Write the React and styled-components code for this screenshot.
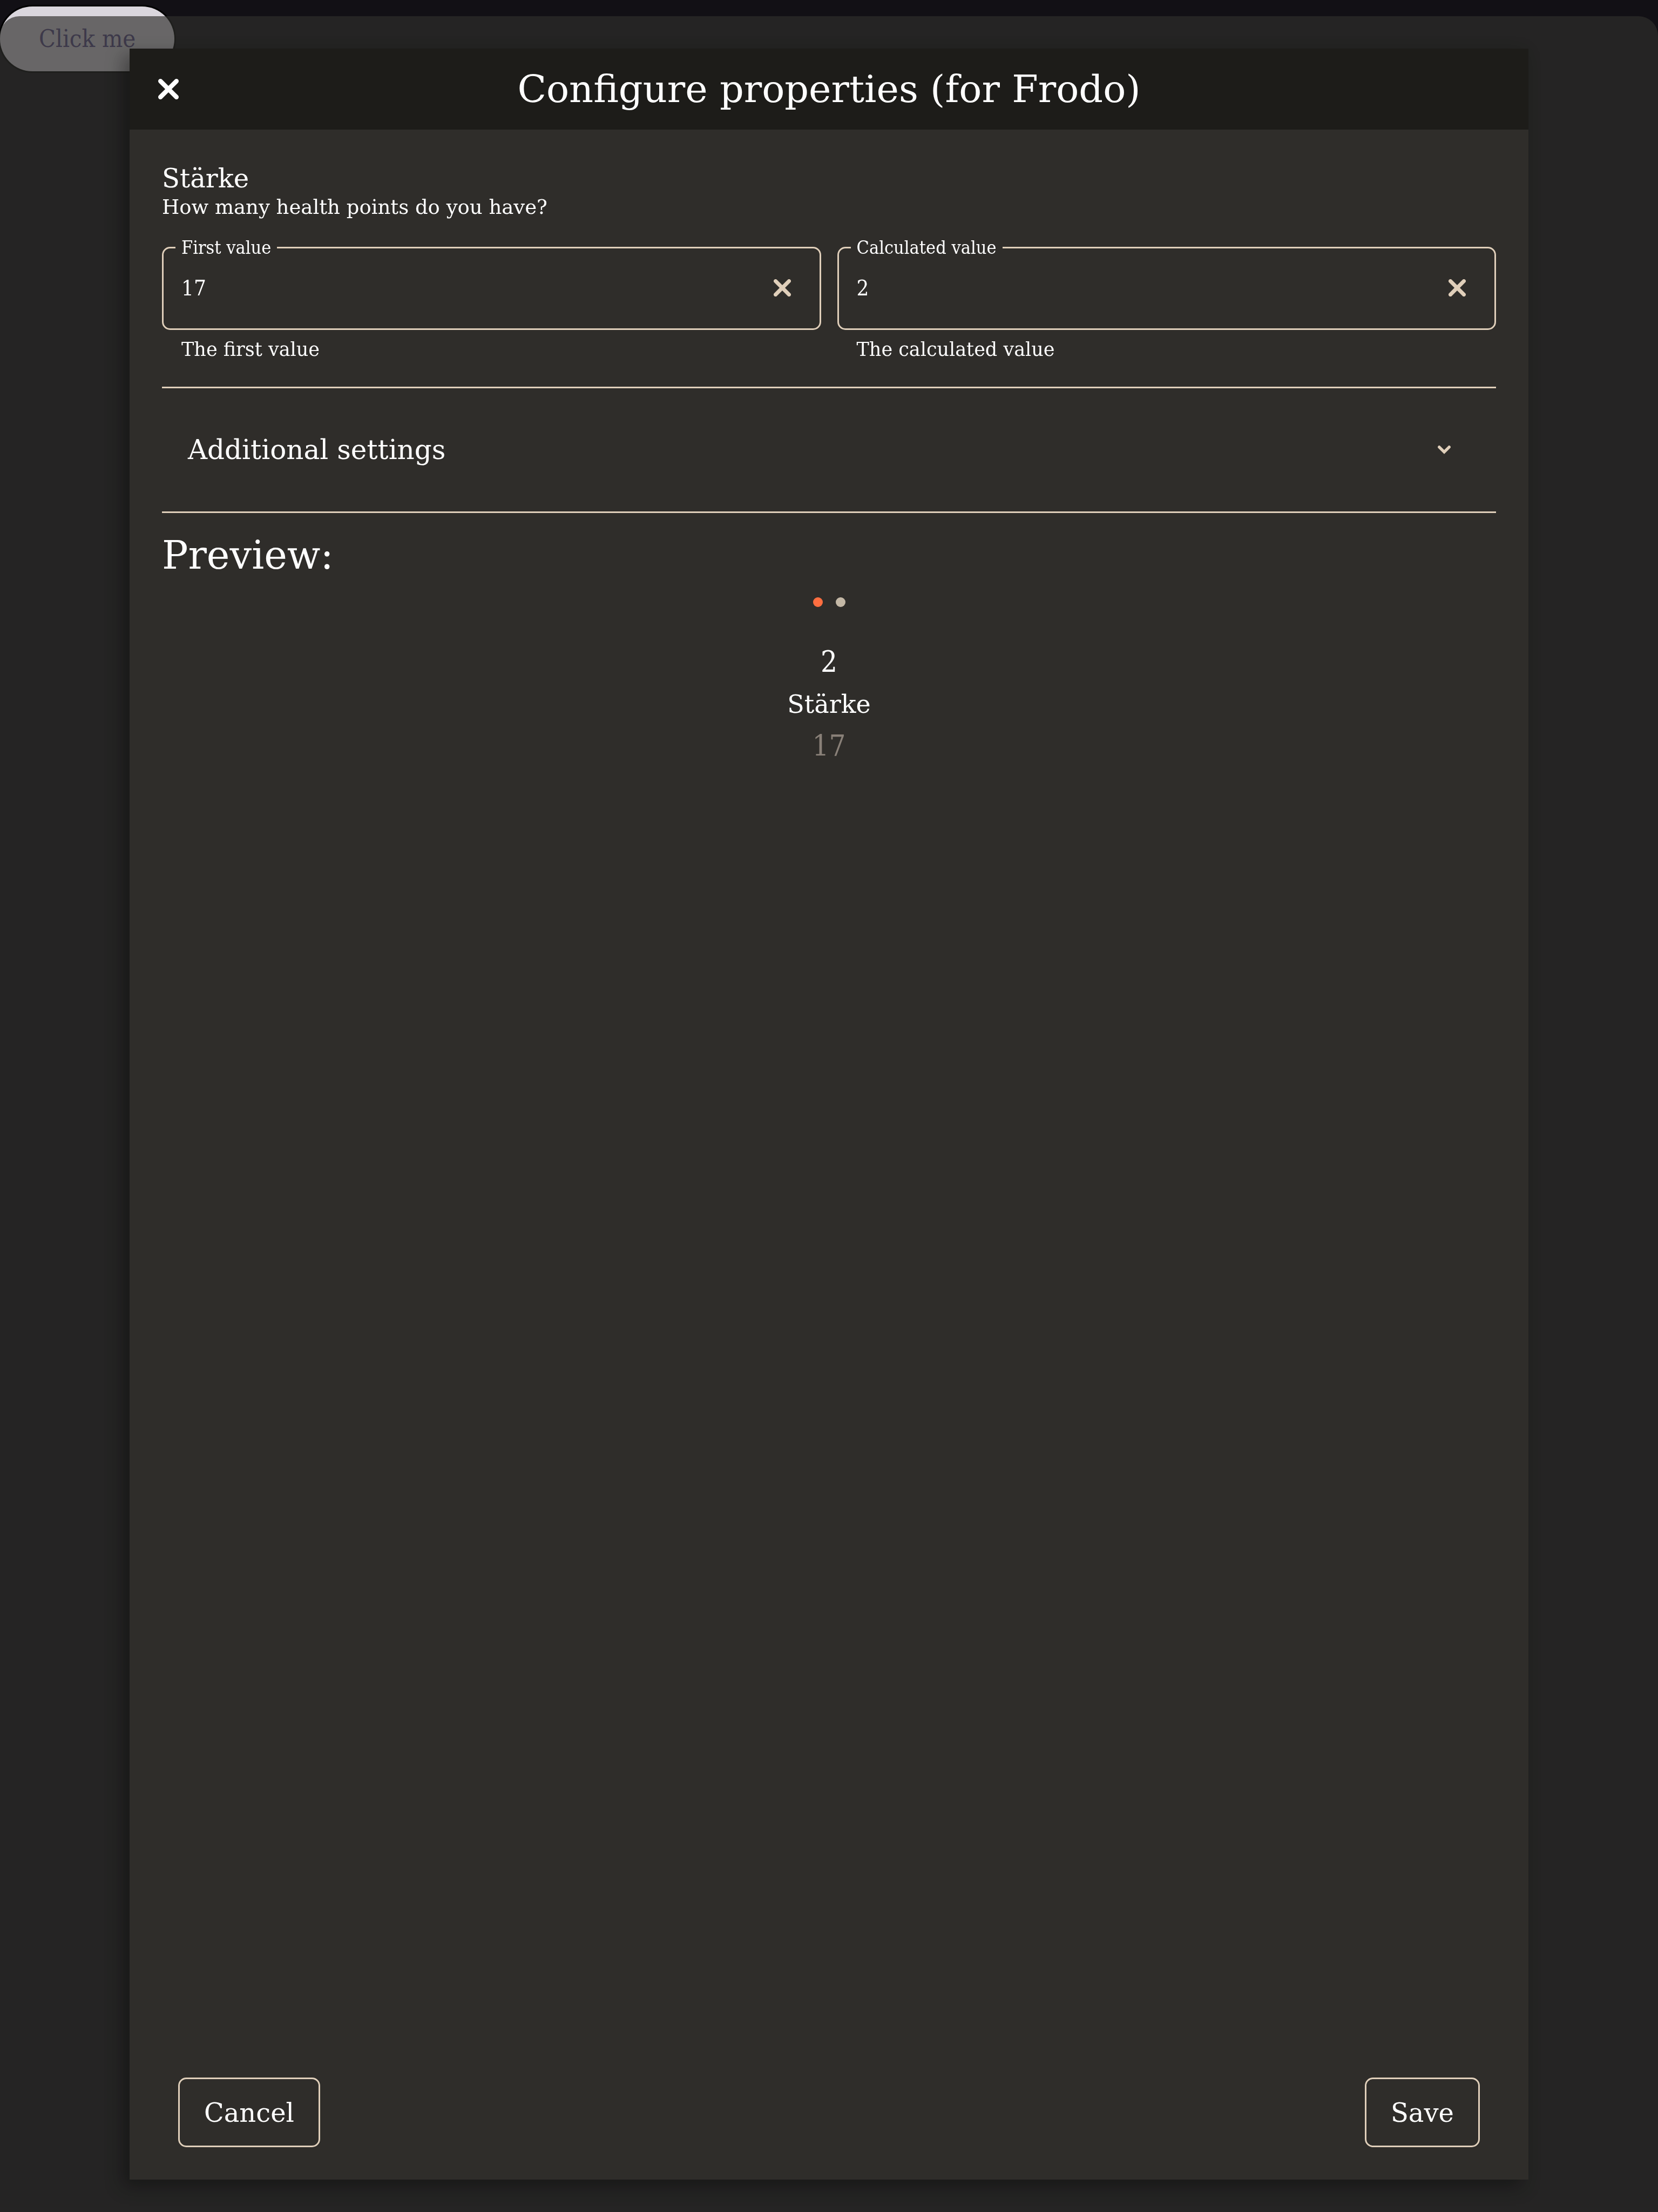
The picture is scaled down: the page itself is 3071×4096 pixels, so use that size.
import React, { useState } from "react";
import styled, { createGlobalStyle, css } from "styled-components";

const color = {
  page: "#121015",
  scrim: "rgba(46, 46, 44, 0.665)",
  header: "#1d1c19",
  panel: "#2f2d2a",
  line: "#e0cfba",
  text: "#ffffff",
  muted: "#898078",
  accent: "#ff6e40",
  dot: "#c4b8a6",
};

const serif = '"DejaVu Serif", serif';
const narrowSerif = '"DejaVu Serif Condensed", "DejaVu Serif", serif';

const GlobalStyle = createGlobalStyle`
  *, *::before, *::after { box-sizing: border-box; }
  body {
    margin: 0;
    background: ${color.page};
    color: ${color.text};
    font-family: ${serif};
  }
  button, input { font: inherit; color: inherit; margin: 0; }
  button { cursor: pointer; }
`;

const Page = styled.main`
  min-height: 100vh;
  padding-top: 12px;
`;

const TriggerButton = styled.button`
  height: 120px;
  padding: 0 72px;
  border: 0;
  border-radius: 60px;
  background: #dad6dd;
  color: #5c5086;
  box-shadow: 0 0 0 3px #000;
  font-family: ${narrowSerif};
  font-size: 45px;
  line-height: 60px;
`;

const Scrim = styled.div`
  position: fixed;
  inset: 30px 0 0 0;
  display: flex;
  padding: 60px 240px;
  border-radius: 36px 36px 0 0;
  background: ${color.scrim};
`;

const Dialog = styled.section`
  flex: 1;
  min-width: 0;
  display: flex;
  flex-direction: column;
  background: ${color.panel};
  box-shadow: -12px 12px 30px rgba(0, 0, 0, 0.35);
`;

const DialogHeader = styled.header`
  display: grid;
  grid-template-columns: 96px 1fr 96px;
  align-items: center;
  height: 150px;
  padding: 0 24px;
  background: ${color.header};
`;

const DialogTitle = styled.h1`
  margin: 0;
  font-size: 70px;
  font-weight: 400;
  line-height: 90px;
  text-align: center;
`;

const IconButton = styled.button`
  display: flex;
  align-items: center;
  justify-content: center;
  width: ${(p) => p.$size}px;
  height: ${(p) => p.$size}px;
  flex: none;
  padding: 0;
  border: 0;
  background: none;
  color: ${(p) => p.$tone};
`;

const DialogBody = styled.div`
  flex: 1;
  padding: 60px;
`;

const PropertyName = styled.h2`
  margin: 0;
  font-size: 48px;
  font-weight: 400;
  line-height: 60px;
`;

const PropertyHint = styled.p`
  margin: 0;
  font-size: 37px;
  line-height: 48px;
`;

const Fields = styled.div`
  display: grid;
  grid-template-columns: 1fr 1fr;
  gap: 30px;
  margin-top: 32px;
`;

const Outline = styled.fieldset`
  min-width: 0;
  margin: 0;
  padding: 0 33px 0 22px;
  border: 3px solid ${color.line};
  border-radius: 15px;
`;

const Legend = styled.legend`
  padding: 0 11px;
  font-family: ${narrowSerif};
  font-size: 34px;
  line-height: 36px;
`;

const InputRow = styled.div`
  display: flex;
  align-items: center;
  height: 150px;
  margin-top: -18px;
`;

const ValueInput = styled.input`
  flex: 1;
  min-width: 0;
  height: 72px;
  padding: 0 11px;
  border: 0;
  outline: 0;
  background: none;
  font-family: ${narrowSerif};
  font-size: 40px;
`;

const Helper = styled.p`
  margin: 15px 0 0;
  padding: 0 36px;
  font-size: 35px;
  line-height: 42px;
`;

const Accordion = styled.div`
  margin-top: 48px;
  border-top: 3px solid ${color.line};
  border-bottom: 3px solid ${color.line};
`;

const AccordionToggle = styled.button`
  display: flex;
  align-items: center;
  justify-content: space-between;
  width: 100%;
  height: 228px;
  padding: 0 84px 0 48px;
  border: 0;
  background: none;
  font-size: 50px;
  line-height: 60px;
`;

const PreviewTitle = styled.h2`
  margin: 33px 0 0;
  font-size: 72px;
  font-weight: 400;
  line-height: 90px;
`;

const Preview = styled.div`
  display: flex;
  flex-direction: column;
  align-items: center;
  padding-top: 33px;
`;

const Dots = styled.div`
  display: flex;
  gap: 24px;
  margin-bottom: 63px;
`;

const Dot = styled.span`
  width: 18px;
  height: 18px;
  border-radius: 50%;
  background: ${(p) => (p.$active ? color.accent : color.dot)};
`;

const PreviewLine = styled.div`
  font-size: 46px;
  line-height: 78px;
  ${(p) =>
    p.$number &&
    css`
      font-family: ${narrowSerif};
      font-size: 54px;
    `}
  color: ${(p) => (p.$muted ? color.muted : color.text)};
`;

const DialogFooter = styled.footer`
  display: flex;
  justify-content: space-between;
  padding: 0 90px 60px;
`;

const ActionButton = styled.button`
  height: 129px;
  padding: 0 45px;
  border: 3px solid ${color.line};
  border-radius: 15px;
  background: none;
  font-size: 48px;
  line-height: 60px;
`;

function CrossIcon({ size }) {
  return (
    <svg width={size} height={size} viewBox="0 0 38 38" fill="none" aria-hidden="true">
      <path d="M4.2 4.2 33.8 33.8M33.8 4.2 4.2 33.8" stroke="currentColor" strokeWidth="8.4" strokeLinecap="round" />
    </svg>
  );
}

function ChevronIcon() {
  return (
    <svg width="24" height="16" viewBox="0 0 24 16" fill="none" aria-hidden="true">
      <path d="M2.8 2.8 12 12l9.2-9.2" stroke={color.line} strokeWidth="5.4" strokeLinecap="round" />
    </svg>
  );
}

function ValueField({ id, label, helper, value, onChange }) {
  return (
    <div>
      <Outline>
        <Legend>
          <label htmlFor={id}>{label}</label>
        </Legend>
        <InputRow>
          <ValueInput
            id={id}
            value={value}
            aria-describedby={`${id}-helper`}
            onChange={(e) => onChange(e.target.value)}
          />
          <IconButton type="button" aria-label="Clear" $size={72} $tone={color.line} onClick={() => onChange("")}>
            <CrossIcon size={32} />
          </IconButton>
        </InputRow>
      </Outline>
      <Helper id={`${id}-helper`}>{helper}</Helper>
    </div>
  );
}

export default function App() {
  const [first, setFirst] = useState("17");
  const [calculated, setCalculated] = useState("2");

  return (
    <>
      <GlobalStyle />
      <Page>
        <TriggerButton type="button">Click me</TriggerButton>
      </Page>
      <Scrim>
        <Dialog role="dialog" aria-modal="true" aria-labelledby="dialog-title">
          <DialogHeader>
            <IconButton type="button" aria-label="Close" $size={96} $tone={color.text}>
              <CrossIcon size={38} />
            </IconButton>
            <DialogTitle id="dialog-title">Configure properties (for Frodo)</DialogTitle>
          </DialogHeader>
          <DialogBody>
            <PropertyName>Stärke</PropertyName>
            <PropertyHint>How many health points do you have?</PropertyHint>
            <Fields>
              <ValueField
                id="first-value"
                label="First value"
                helper="The first value"
                value={first}
                onChange={setFirst}
              />
              <ValueField
                id="calculated-value"
                label="Calculated value"
                helper="The calculated value"
                value={calculated}
                onChange={setCalculated}
              />
            </Fields>
            <Accordion>
              <AccordionToggle type="button" aria-expanded="false">
                Additional settings
                <ChevronIcon />
              </AccordionToggle>
            </Accordion>
            <PreviewTitle>Preview:</PreviewTitle>
            <Preview>
              <Dots>
                <Dot $active />
                <Dot />
              </Dots>
              <PreviewLine $number>{calculated}</PreviewLine>
              <PreviewLine>Stärke</PreviewLine>
              <PreviewLine $number $muted>
                {first}
              </PreviewLine>
            </Preview>
          </DialogBody>
          <DialogFooter>
            <ActionButton type="button">Cancel</ActionButton>
            <ActionButton type="button">Save</ActionButton>
          </DialogFooter>
        </Dialog>
      </Scrim>
    </>
  );
}
